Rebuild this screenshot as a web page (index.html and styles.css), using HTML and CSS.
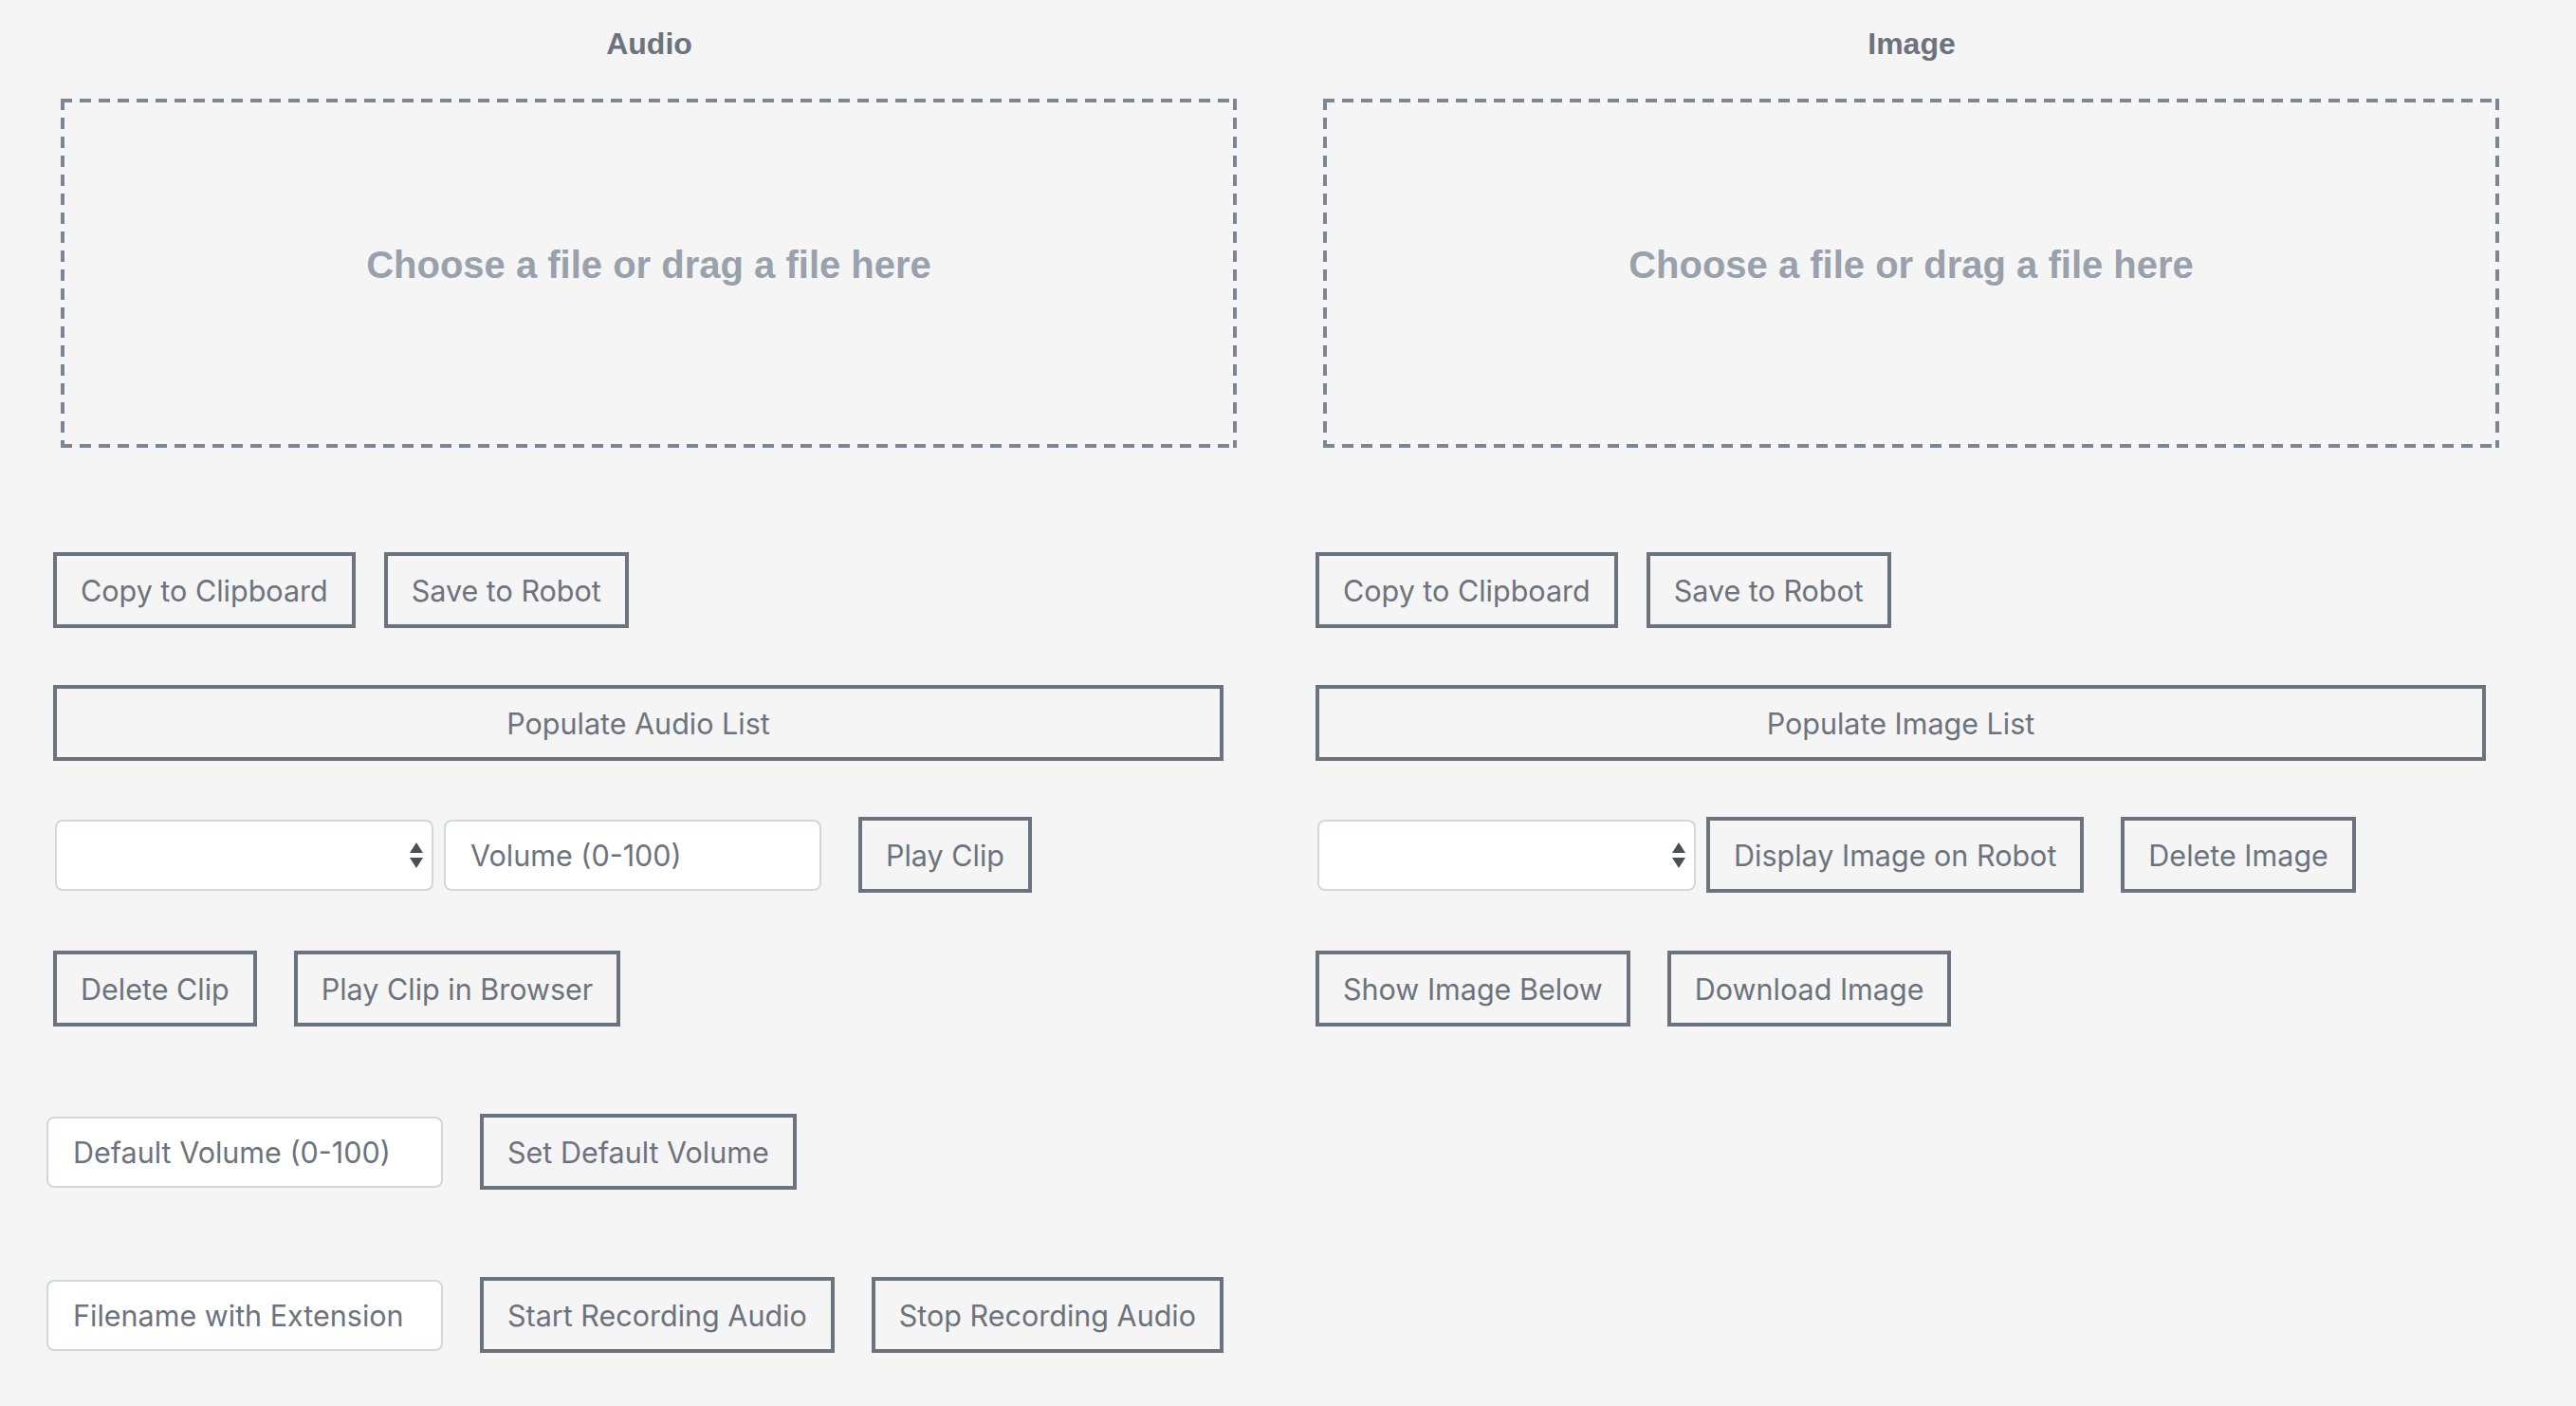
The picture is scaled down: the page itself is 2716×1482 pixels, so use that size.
FILE: index.html
```html
<!DOCTYPE html>
<html>
<head>
<meta charset="utf-8">
<title>Audio / Image</title>
<link rel="stylesheet" href="styles.css">
</head>
<body>
<div class="page">
  <section class="col">
    <h2 class="col-title">Audio</h2>
    <div class="dropzone"><span>Choose a file or drag a file here</span></div>
    <div class="row row-1">
      <button class="btn">Copy to Clipboard</button>
      <button class="btn gap-s">Save to Robot</button>
    </div>
    <div class="row row-2">
      <button class="btn btn-wide">Populate Audio List</button>
    </div>
    <div class="row row-3">
      <div class="select"><span class="arrows"><i class="up"></i><i class="down"></i></span></div>
      <div class="input gap-xs"><span class="ph">Volume (0-100)</span></div>
      <button class="btn gap-m">Play Clip</button>
    </div>
    <div class="row row-4">
      <button class="btn">Delete Clip</button>
      <button class="btn gap-m">Play Clip in Browser</button>
    </div>
    <div class="row row-5 inset">
      <div class="input input-l"><span class="ph">Default Volume (0-100)</span></div>
      <button class="btn gap-m">Set Default Volume</button>
    </div>
    <div class="row row-6 inset">
      <div class="input input-l"><span class="ph">Filename with Extension</span></div>
      <button class="btn gap-m">Start Recording Audio</button>
      <button class="btn gap-m">Stop Recording Audio</button>
    </div>
  </section>
  <section class="col">
    <h2 class="col-title">Image</h2>
    <div class="dropzone"><span>Choose a file or drag a file here</span></div>
    <div class="row row-1">
      <button class="btn">Copy to Clipboard</button>
      <button class="btn gap-s">Save to Robot</button>
    </div>
    <div class="row row-2">
      <button class="btn btn-wide">Populate Image List</button>
    </div>
    <div class="row row-3">
      <div class="select"><span class="arrows"><i class="up"></i><i class="down"></i></span></div>
      <button class="btn gap-xs">Display Image on Robot</button>
      <button class="btn gap-m">Delete Image</button>
    </div>
    <div class="row row-4">
      <button class="btn">Show Image Below</button>
      <button class="btn gap-m">Download Image</button>
    </div>
  </section>
</div>
</body>
</html>
```

FILE: styles.css
```css
html, body {
  margin: 0;
  padding: 0;
  background: #f5f5f5;
}
body {
  font-family: Inter, "Noto Sans", sans-serif;
  color: #6c737c;
}
.page {
  display: flex;
  padding-left: 19px;
}
.col {
  width: 1331px;
  flex: none;
  display: flex;
  flex-direction: column;
}
.col-title {
  margin: 28px 0 0 0;
  height: 36px;
  line-height: 36px;
  text-align: center;
  font-family: "Liberation Sans", Arial, sans-serif;
  font-weight: bold;
  font-size: 32px;
  color: #6c737c;
}
.dropzone {
  margin: 40px 0 0 45px;
  width: 1240px;
  height: 368px;
  box-sizing: border-box;
  background:
    repeating-linear-gradient(90deg, #7d8794 0 12px, transparent 12px 20px) top left / 100% 4px no-repeat,
    repeating-linear-gradient(90deg, #7d8794 0 12px, transparent 12px 20px) bottom left / 100% 4px no-repeat,
    repeating-linear-gradient(180deg, #7d8794 0 12px, transparent 12px 20px) top left / 4px 100% no-repeat,
    repeating-linear-gradient(180deg, #7d8794 0 12px, transparent 12px 20px) top right / 4px 100% no-repeat;
  display: flex;
  align-items: center;
  justify-content: center;
  font-family: "Liberation Sans", Arial, sans-serif;
  font-weight: bold;
  font-size: 40px;
  color: #98a1ac;
  padding-bottom: 18px;
}
.row {
  display: flex;
  align-items: center;
  margin-left: 37px;
  height: 80px;
}
.row.inset { margin-left: 30px; }
.row-1 { margin-top: 110px; }
.row-2 { margin-top: 60px; }
.row-3 { margin-top: 59px; }
.row-4 { margin-top: 61px; }
.row-5 { margin-top: 92px; }
.row-6 { margin-top: 92px; }

.btn {
  height: 80px;
  box-sizing: border-box;
  border: 4px solid #6c737c;
  background: transparent;
  color: #6c737c;
  font-family: Inter, "Noto Sans", sans-serif;
  font-size: 30.5px;
  padding: 0 25px;
  margin: 0;
  border-radius: 0;
  white-space: nowrap;
}
.btn-wide { width: 1234px; }
.gap-xs { margin-left: 11px; }
.gap-s { margin-left: 30px; }
.gap-m { margin-left: 39px; }

.select, .input {
  height: 75px;
  box-sizing: border-box;
  border: 2px solid #d3d7dc;
  border-radius: 8px;
  background: #ffffff;
  display: flex;
  align-items: center;
}
.select {
  width: 399px;
  margin-left: 2px;
  justify-content: flex-end;
  padding-right: 8px;
}
.input {
  width: 398px;
  padding-left: 26px;
}
.input-l { width: 418px; }
.ph {
  font-size: 30.5px;
  color: #6c737c;
  white-space: nowrap;
}
.arrows {
  display: flex;
  flex-direction: column;
  align-items: center;
  gap: 5px;
  width: 16px;
}
.arrows i {
  display: block;
  width: 0;
  height: 0;
  border-left: 7px solid transparent;
  border-right: 7px solid transparent;
}
.arrows .up { border-bottom: 11px solid #4a4f56; }
.arrows .down { border-top: 11px solid #4a4f56; }
```
